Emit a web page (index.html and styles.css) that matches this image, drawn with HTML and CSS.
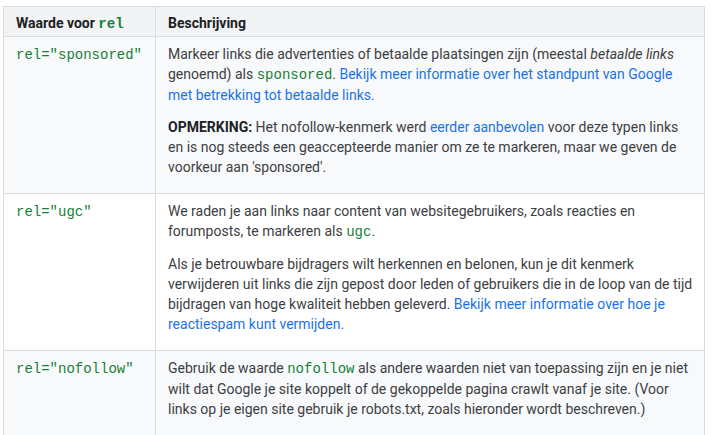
FILE: index.html
```html
<!DOCTYPE html>
<html lang="nl">
<head>
<meta charset="utf-8">
<link rel="stylesheet" href="styles.css">
</head>
<body>
<table class="rel-table">
  <thead>
    <tr>
      <th class="col-key">Waarde voor <code>rel</code></th>
      <th>Beschrijving</th>
    </tr>
  </thead>
  <tbody>
    <tr class="alt">
      <td class="col-key"><code>rel="sponsored"</code></td>
      <td>
        <p>Markeer links die advertenties of betaalde plaatsingen zijn (meestal <em>betaalde links</em> genoemd) als <code>sponsored</code>. <a href="#">Bekijk meer informatie over het standpunt van Google met betrekking tot betaalde links.</a></p>
        <p><strong>OPMERKING:</strong> Het nofollow-kenmerk werd <a href="#">eerder aanbevolen</a> voor deze typen links en is nog steeds een geaccepteerde manier om ze te markeren, maar we geven de voorkeur aan 'sponsored'.</p>
      </td>
    </tr>
    <tr>
      <td class="col-key"><code>rel="ugc"</code></td>
      <td>
        <p>We raden je aan links naar content van websitegebruikers, zoals reacties en forumposts, te markeren als <code>ugc</code>.</p>
        <p>Als je betrouwbare bijdragers wilt herkennen en belonen, kun je dit kenmerk verwijderen uit links die zijn gepost door leden of gebruikers die in de loop van de tijd bijdragen van hoge kwaliteit hebben geleverd. <a href="#">Bekijk meer informatie over hoe je reactiespam kunt vermijden.</a></p>
      </td>
    </tr>
    <tr class="alt">
      <td class="col-key"><code>rel="nofollow"</code></td>
      <td>
        <p>Gebruik de waarde <code>nofollow</code> als andere waarden niet van toepassing zijn en je niet wilt dat Google je site koppelt of de gekoppelde pagina crawlt vanaf je site. (Voor links op je eigen site gebruik je robots.txt, zoals hieronder wordt beschreven.)</p>
      </td>
    </tr>
  </tbody>
</table>
</body>
</html>
```
FILE: styles.css
```css
html, body {
  margin: 0;
  padding: 0;
  background: #ffffff;
}
body {
  padding: 6px 0 0 3px;
  font-family: Roboto, "Noto Sans", Arial, sans-serif;
  font-size: 14px;
  line-height: 20px;
  color: #3c4043;
}
.rel-table {
  border-collapse: collapse;
  width: 702px;
  table-layout: fixed;
}
.rel-table th,
.rel-table td {
  border: 1px solid #dadce0;
  text-align: left;
  vertical-align: top;
}
.rel-table th {
  background: #f1f3f4;
  color: #202124;
  font-weight: 700;
  padding: 6px 10px 2px 12px;
}
.rel-table td {
  padding: 7px 10px 16px 12px;
}
.rel-table .col-key {
  width: 129px;
}
.rel-table tr.alt td {
  background: #f8f9fa;
}
.rel-table p {
  margin: 0 0 12px;
}
.rel-table p:last-child {
  margin-bottom: 0;
}
code {
  font-family: "Liberation Mono", "DejaVu Sans Mono", monospace;
  font-size: 14px;
  color: #188038;
}
th code {
  font-weight: 700;
}
a {
  color: #1a73e8;
  text-decoration: none;
}
strong {
  font-weight: 700;
  color: #202124;
}
em {
  font-style: italic;
}
```
